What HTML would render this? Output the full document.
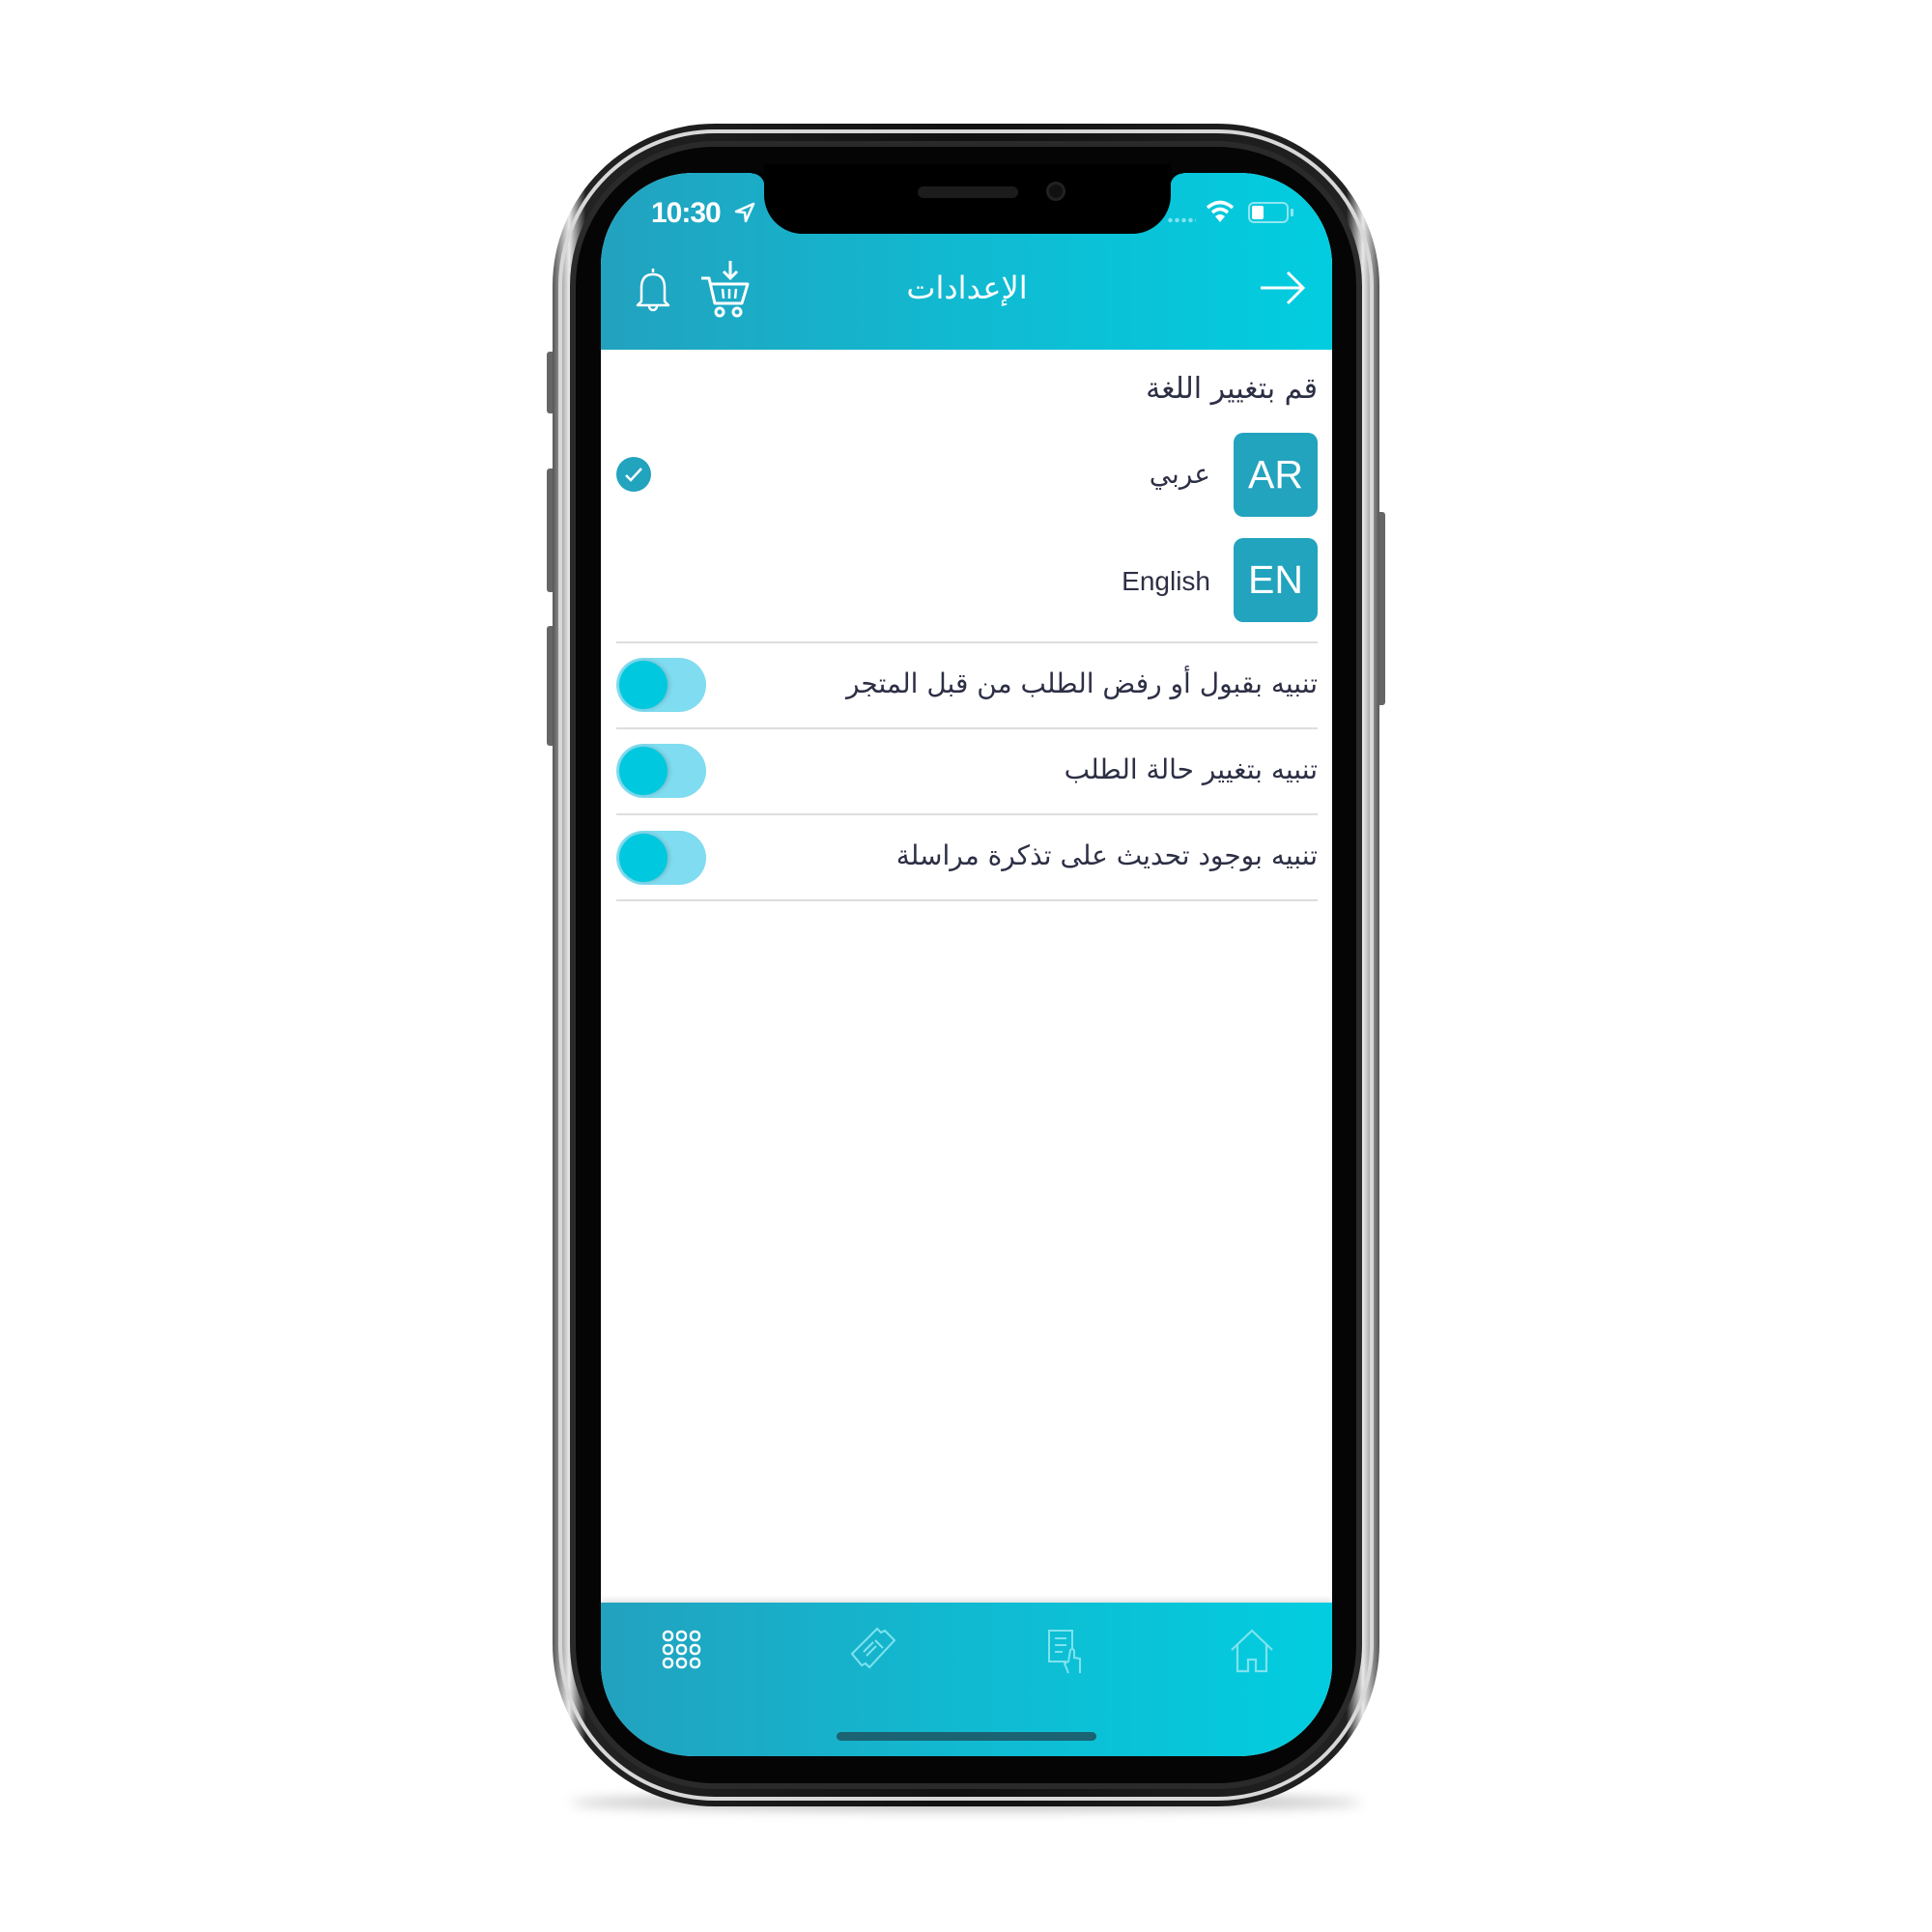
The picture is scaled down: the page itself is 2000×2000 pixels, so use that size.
<!DOCTYPE html>
<html><head><meta charset="utf-8"><style>
*{margin:0;padding:0;box-sizing:border-box}
body{width:2000px;height:2000px;background:#fff;position:relative;overflow:hidden;font-family:"Liberation Sans","DejaVu Sans",sans-serif}
.abs{position:absolute}
.grad{background:linear-gradient(90deg,#22a2bf 0%,#0fbcd3 55%,#02cde0 100%)}
.ar{font-family:"DejaVu Sans",sans-serif;color:#2d2f45;direction:rtl;white-space:nowrap}
.sep{position:absolute;left:638px;width:726px;height:2px;background:#dedede}
.tog{position:absolute;left:638px;width:93px;height:56px;border-radius:28px;background:#80dcf0}
.tog i{position:absolute;left:3px;top:3px;width:50px;height:50px;border-radius:50%;background:#00c9df;box-shadow:2px 0 4px rgba(0,0,0,.15)}
.box{position:absolute;left:1277px;width:87px;height:87px;border-radius:10px;background:#22a3be;color:#fff;font-size:41px;text-align:center;line-height:87px}
</style></head><body>
<div class="abs" style="left:590px;top:1858px;width:820px;height:16px;border-radius:50%;background:rgba(0,0,0,.25);filter:blur(6px)"></div>
<div class="abs" style="left:566px;top:364px;width:10px;height:64px;background:#666;border-radius:3px"></div>
<div class="abs" style="left:566px;top:485px;width:10px;height:128px;background:#666;border-radius:3px"></div>
<div class="abs" style="left:566px;top:648px;width:10px;height:124px;background:#666;border-radius:3px"></div>
<div class="abs" style="left:1424px;top:530px;width:10px;height:200px;background:#666;border-radius:3px"></div>
<div class="abs" style="left:572px;top:128px;width:856px;height:1742px;border-radius:168px;background:linear-gradient(90deg,#555,#e8e8e8 2%,#222 4%,#111 50%,#222 96%,#e8e8e8 98%,#555);"></div>
<div class="abs" style="left:578px;top:134px;width:844px;height:1730px;border-radius:162px;border:4px solid #d8d8d8;"></div>
<div class="abs" style="left:590px;top:146px;width:820px;height:1706px;border-radius:150px;background:#050505;border:6px solid #2a2a2a"></div>
<div class="abs" style="left:622px;top:179px;width:757px;height:1639px;border-radius:96px;overflow:hidden;background:#fff">
  <div class="abs grad" style="left:0;top:0;width:757px;height:183px"></div>
  <div class="abs grad" style="left:0;top:1480px;width:757px;height:159px;box-shadow:0 -3px 6px rgba(0,0,0,.12)"></div>
</div>
<div class="abs" style="left:791px;top:170px;width:421px;height:72px;background:#000;border-radius:0 0 40px 40px"></div>
<div class="abs" style="left:778px;top:179px;width:14px;height:14px;background:radial-gradient(circle at 0 100%,transparent 13px,#000 14px)"></div>
<div class="abs" style="left:1211px;top:179px;width:14px;height:14px;background:radial-gradient(circle at 100% 100%,transparent 13px,#000 14px)"></div>
<div class="abs" style="left:950px;top:193px;width:104px;height:12px;border-radius:6px;background:#1c1c1c"></div>
<div class="abs" style="left:1083px;top:188px;width:20px;height:20px;border-radius:50%;background:#111;border:3px solid #222"></div>
<div class="abs" style="left:674px;top:204px;color:#fff;font-size:30px;font-weight:bold;letter-spacing:-1px">10:30</div>
<svg class="abs" style="left:760px;top:209px" width="22" height="22" viewBox="0 0 22 22"><path d="M20 2 L2 10 L11 11 L12 20 Z" fill="none" stroke="#fff" stroke-width="2.5" stroke-linejoin="round"/></svg>
<div class="abs" style="left:1208px;top:225px;width:30px;height:6px;background:radial-gradient(circle,#7ee3ee 2px,transparent 2.5px) 0 0/7px 6px"></div>
<svg class="abs" style="left:1248px;top:206px" width="30" height="26" viewBox="0 0 30 26"><path d="M2 9 Q15 -2 28 9" stroke="#fff" stroke-width="3.5" fill="none"/><path d="M7 14 Q15 7 23 14" stroke="#fff" stroke-width="3.5" fill="none"/><path d="M15 24 L10 18 Q15 14 20 18 Z" fill="#fff"/></svg>
<div class="abs" style="left:1292px;top:209px;width:42px;height:22px;border:2px solid #8ee6f0;border-radius:6px"><div style="margin:2px;width:12px;height:14px;background:#fff;border-radius:2px"></div></div>
<div class="abs" style="left:1336px;top:216px;width:3px;height:8px;background:#8ee6f0;border-radius:1px"></div>
<svg class="abs" style="left:656px;top:274px" width="40" height="50" viewBox="0 0 40 50"><path d="M20 4 L20 8 M8 38 L8 24 Q8 10 20 10 Q32 10 32 24 L32 38 L36 42 L4 42 Z" fill="none" stroke="#fff" stroke-width="2.5" stroke-linejoin="round"/><path d="M16 43 A4 4 0 0 0 24 43" fill="none" stroke="#fff" stroke-width="2.5"/></svg>
<svg class="abs" style="left:724px;top:268px" width="60" height="64" viewBox="0 0 60 64"><path d="M32 2 L32 20 M25 13 L32 20 L39 13" fill="none" stroke="#fff" stroke-width="3"/><path d="M2 20 L10 20 L16 46 L44 46 L50 26 L12 26" fill="none" stroke="#fff" stroke-width="3" stroke-linejoin="round"/><path d="M24 31 L25 41 M31 31 L31 41 M38 31 L37 41" stroke="#fff" stroke-width="2.5"/><circle cx="21" cy="55" r="4" fill="none" stroke="#fff" stroke-width="3"/><circle cx="39" cy="55" r="4" fill="none" stroke="#fff" stroke-width="3"/></svg>
<div class="abs ar" style="left:880px;width:242px;top:279px;text-align:center;color:#fff;font-size:32px">الإعدادات</div>
<svg class="abs" style="left:1303px;top:278px" width="50" height="40" viewBox="0 0 50 40"><path d="M2 20 L46 20 M30 4 L46 20 L30 36" fill="none" stroke="#fff" stroke-width="3"/></svg>
<div class="abs ar" style="right:636px;top:385px;font-size:30px">قم بتغيير اللغة</div>
<div class="box" style="top:448px">AR</div>
<div class="abs ar" style="right:747px;top:474px;font-size:28px">عربي</div>
<div class="abs" style="left:638px;top:473px;width:36px;height:36px;border-radius:50%;background:#22a3be"></div>
<svg class="abs" style="left:638px;top:473px" width="36" height="36" viewBox="0 0 36 36"><path d="M10 19 L15 24 L26 12" fill="none" stroke="#fff" stroke-width="2.5"/></svg>
<div class="box" style="top:557px">EN</div>
<div class="abs" style="right:747px;top:586px;font-size:28px;color:#2d2f45">English</div>
<div class="sep" style="top:664px"></div>
<div class="abs ar" style="right:636px;top:691px;font-size:28px">تنبيه بقبول أو رفض الطلب من قبل المتجر</div>
<div class="tog" style="top:681px"><i></i></div>
<div class="sep" style="top:753px"></div>
<div class="abs ar" style="right:636px;top:780px;font-size:28px">تنبيه بتغيير حالة الطلب</div>
<div class="tog" style="top:770px"><i></i></div>
<div class="sep" style="top:842px"></div>
<div class="abs ar" style="right:636px;top:869px;font-size:28px">تنبيه بوجود تحديث على تذكرة مراسلة</div>
<div class="tog" style="top:860px"><i></i></div>
<div class="sep" style="top:931px"></div>
<svg class="abs" style="left:684px;top:1686px" width="44" height="44" viewBox="0 0 44 44" fill="none" stroke="#fff" stroke-width="2.5"><g id="r"><rect x="3" y="3" width="9" height="9" rx="4"/><rect x="17" y="3" width="9" height="9" rx="4"/><rect x="31" y="3" width="9" height="9" rx="4"/></g><use href="#r" y="14"/><use href="#r" y="28"/></svg>
<svg class="abs" style="left:880px;top:1684px" width="48" height="46" viewBox="0 0 48 46" fill="none" stroke="#7ee3ee" stroke-width="2"><path d="M2 28 L28 2 L32 6 L36 4 L46 14 L20 42 L16 38 L12 40 Z"/><path d="M14 26 L24 16 M17 30 L27 20 M26 14 L34 22"/></svg>
<svg class="abs" style="left:1082px;top:1686px" width="40" height="48" viewBox="0 0 40 48" fill="none" stroke="#7ee3ee" stroke-width="2"><path d="M22 34 L4 34 L4 2 L28 2 L28 22"/><path d="M10 10 L22 10 M10 17 L22 17 M10 24 L18 24"/><path d="M24 46 L20 36 L24 34 L26 22 Q29 20 30 23 L30 30 L36 31 L36 46"/></svg>
<svg class="abs" style="left:1273px;top:1686px" width="46" height="46" viewBox="0 0 46 46" fill="none" stroke="#7ee3ee" stroke-width="2.2"><path d="M2 22 L23 2 L44 22 M8 17 L8 44 L19 44 L19 32 L27 32 L27 44 L38 44 L38 17"/></svg>
<div class="abs" style="left:866px;top:1793px;width:269px;height:9px;border-radius:5px;background:#1b6272"></div>
</body></html>
